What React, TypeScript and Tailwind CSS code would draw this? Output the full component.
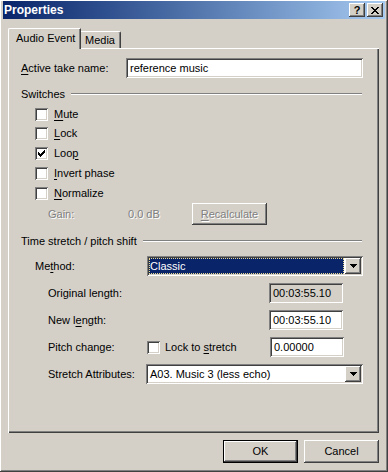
import type { ReactNode } from 'react'

const sunken =
  'shadow-[inset_1px_1px_#808080,inset_-1px_-1px_#ffffff,inset_2px_2px_#404040,inset_-2px_-2px_#d4d0c8]'
const raised =
  'shadow-[inset_-1px_-1px_#404040,inset_1px_1px_#ffffff,inset_-2px_-2px_#808080,inset_2px_2px_#d4d0c8]'
const disabled = 'text-[#808080] [text-shadow:1px_1px_0_#ffffff]'

function U({ children }: { children: ReactNode }) {
  return <span className="underline underline-offset-[2px]">{children}</span>
}

function Checkbox({ checked = false }: { checked?: boolean }) {
  return (
    <div className={`w-[13px] h-[13px] shrink-0 bg-white flex items-center justify-center ${sunken}`}>
      {checked && (
        <svg width="7" height="7" viewBox="0 0 7 7" shapeRendering="crispEdges">
          <path d="M0 2h1v3h-1zM1 3h1v3h-1zM2 4h1v3h-1zM3 3h1v3h-1zM4 2h1v3h-1zM5 1h1v3h-1zM6 0h1v3h-1z" fill="#000" />
        </svg>
      )}
    </div>
  )
}

function CheckRow({ label, checked, h = 'h-[20px]' }: { label: ReactNode; checked?: boolean; h?: string }) {
  return (
    <div className={`flex items-center pl-[14px] ${h}`}>
      <Checkbox checked={checked} />
      <span className="ml-[6px]">{label}</span>
    </div>
  )
}

function GroupHeader({ title }: { title: string }) {
  return (
    <div className="flex items-center h-[14px] pr-[17px]">
      <span>{title}</span>
      <div className="flex-1 ml-[6px] h-[2px] border-t border-[#808080] border-b border-b-white" />
    </div>
  )
}

function Dropdown({ value, selected = false, width }: { value: string; selected?: boolean; width: string }) {
  return (
    <div className={`${width} h-[20px] bg-white flex items-center p-[2px] ${sunken}`}>
      <div className="flex-1 h-full flex items-center pr-[1px]">
        {selected ? (
          <div className="w-full h-[16px] bg-[#0a246a] text-white flex items-center pl-[1px] outline outline-1 outline-dotted outline-[#e8d890] -outline-offset-1">
            {value}
          </div>
        ) : (
          <span className="pl-[2px]">{value}</span>
        )}
      </div>
      <div className={`w-[16px] h-[16px] bg-[#d4d0c8] flex items-center justify-center ${raised}`}>
        <svg width="7" height="4" viewBox="0 0 7 4" shapeRendering="crispEdges">
          <path d="M0 0h7v1h-7zM1 1h5v1h-5zM2 2h3v1h-3zM3 3h1v1h-1z" fill="#000" />
        </svg>
      </div>
    </div>
  )
}

function TimeBox({ value, readOnly = false }: { value: string; readOnly?: boolean }) {
  return (
    <div className={`w-[74px] h-[20px] flex items-center pl-[4px] ${readOnly ? 'bg-[#d4d0c8]' : 'bg-white'} ${sunken}`}>
      {value}
    </div>
  )
}

function TitleButton({ children }: { children: ReactNode }) {
  return (
    <div className={`w-[16px] h-[14px] bg-[#d4d0c8] flex items-center justify-center text-black font-bold text-[11px] leading-none ${raised}`}>
      {children}
    </div>
  )
}

function DialogButton({ children, isDefault = false }: { children: ReactNode; isDefault?: boolean }) {
  return (
    <div
      className={`w-[75px] h-[23px] flex items-center justify-center ${
        isDefault
          ? 'shadow-[inset_1px_1px_#000000,inset_-1px_-1px_#000000,inset_-2px_-2px_#404040,inset_2px_2px_#ffffff,inset_-3px_-3px_#808080]'
          : raised
      }`}
    >
      {children}
    </div>
  )
}

export default function App() {
  return (
    <div
      className="w-[388px] h-[472px] bg-[#d4d0c8] text-black text-[11px] leading-none font-['Liberation_Sans',Arial,sans-serif] flex flex-col shadow-[inset_-1px_-1px_#404040,inset_1px_1px_#ffffff,inset_-2px_-2px_#808080] overflow-hidden"
    >
      {/* Title bar */}
      <div className="mt-[1px] mx-[3px] h-[18px] bg-gradient-to-r from-[#0a246a] to-[#a6caf0] flex items-center pl-[1px] pr-[2px]">
        <span className="text-white font-bold text-[12px]">Properties</span>
        <div className="ml-auto flex gap-[2px]">
          <TitleButton>?</TitleButton>
          <TitleButton>
            <svg width="8" height="7" viewBox="0 0 8 7" shapeRendering="crispEdges">
              <path d="M0 0h2v1h-2zM6 0h2v1h-2zM1 1h2v1h-2zM5 1h2v1h-2zM2 2h4v1h-4zM3 3h2v1h-2zM2 4h4v1h-4zM1 5h2v1h-2zM5 5h2v1h-2zM0 6h2v1h-2zM6 6h2v1h-2z" fill="#000" />
            </svg>
          </TitleButton>
        </div>
      </div>

      {/* Tabs */}
      <div className="mt-[9px] ml-[8px] flex items-end h-[21px] -mb-[1px] relative z-10">
        <div className="h-[21px] w-[73px] bg-[#d4d0c8] border-t border-l border-white rounded-tl-[2px] shadow-[inset_-1px_0_#808080,-0px_0_#000] border-r border-r-[#404040] flex items-center pl-[7px] pb-[2px]">
          Audio Event
        </div>
        <div className="h-[17px] mb-[1px] w-[40px] border-t border-white border-r border-r-[#404040] shadow-[inset_-1px_0_#808080] rounded-tr-[2px] flex items-center pl-[4px]">
          Media
        </div>
      </div>

      {/* Panel */}
      <div className="ml-[8px] w-[371px] h-[385px] flex flex-col pl-[13px] shadow-[inset_1px_1px_#ffffff,inset_-1px_-1px_#404040,inset_-2px_-2px_#808080]">
        <div className="mt-[10px] h-[20px] flex items-center">
          <span className="w-[105px]">
            <U>A</U>ctive take name:
          </span>
          <div className={`w-[237px] h-[20px] bg-white flex items-center pl-[4px] ${sunken}`}>reference music</div>
        </div>

        <div className="mt-[9px]">
          <GroupHeader title="Switches" />
        </div>
        <div className="mt-[3px] flex flex-col">
          <CheckRow label={<><U>M</U>ute</>} />
          <CheckRow label={<><U>L</U>ock</>} h="h-[19px]" />
          <CheckRow label={<>Loo<U>p</U></>} checked />
          <CheckRow label={<><U>I</U>nvert phase</>} />
          <CheckRow label={<><U>N</U>ormalize</>} />
        </div>
        <div className="h-[22px] flex items-center pl-[27px]">
          <span className={`w-[80px] ${disabled}`}>Gain:</span>
          <span className={`w-[64px] ${disabled}`}>0.0 dB</span>
          <div className={`w-[75px] h-[22px] flex items-center justify-center ${raised} ${disabled}`}>
            <U>R</U>ecalculate
          </div>
        </div>

        <div className="mt-[9px]">
          <GroupHeader title="Time stretch / pitch shift" />
        </div>

        <div className="mt-[8px] h-[20px] flex items-center pl-[14px]">
          <span className="w-[112px]">
            Me<U>t</U>hod:
          </span>
          <Dropdown value="Classic" selected width="w-[216px]" />
        </div>

        <div className="mt-[7px] h-[20px] flex items-center pl-[27px]">
          <span className="w-[221px]">Original length:</span>
          <TimeBox value="00:03:55.10" readOnly />
        </div>

        <div className="mt-[7px] h-[20px] flex items-center pl-[27px]">
          <span className="w-[221px]">
            New l<U>e</U>ngth:
          </span>
          <TimeBox value="00:03:55.10" />
        </div>

        <div className="mt-[7px] h-[20px] flex items-center pl-[27px]">
          <span className="w-[99px]">Pitch change:</span>
          <Checkbox />
          <span className="ml-[5px] w-[105px]">
            Lock to <U>s</U>tretch
          </span>
          <TimeBox value="0.00000" />
        </div>

        <div className="mt-[7px] h-[20px] flex items-center pl-[27px]">
          <span className="w-[98px]">Stretch Attributes:</span>
          <Dropdown value="A03. Music 3 (less echo)" width="w-[217px]" />
        </div>
      </div>

      {/* Buttons */}
      <div className="mt-[7px] flex justify-end gap-[6px] pr-[9px]">
        <DialogButton isDefault>OK</DialogButton>
        <DialogButton>Cancel</DialogButton>
      </div>
    </div>
  )
}
